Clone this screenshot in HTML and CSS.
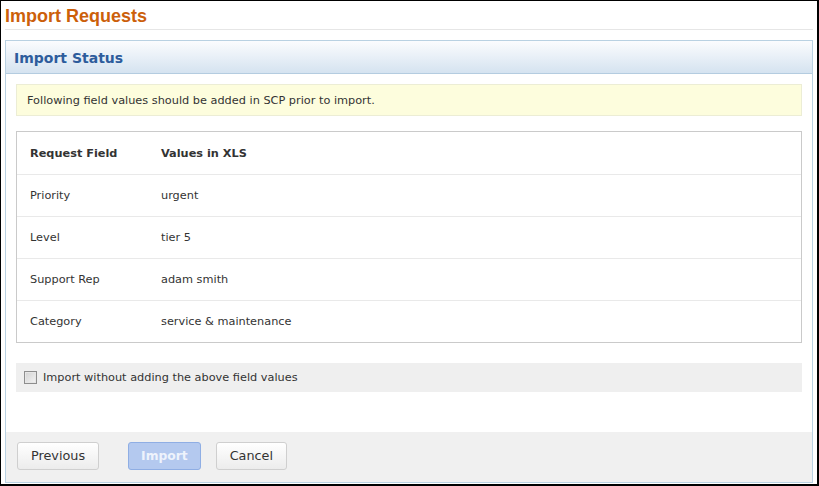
FILE: index.html
```html
<!DOCTYPE html>
<html lang="en">
<head>
  <meta charset="UTF-8">
  <title>Import Requests</title>
  <link rel="stylesheet" href="styles.css">
</head>
<body>
  <div class="frame">
    <h1 class="page-title">Import Requests</h1>

    <div class="panel">
      <div class="panel-head">Import Status</div>

      <div class="panel-body">
        <div class="note">Following field values should be added in SCP prior to import.</div>

        <!-- missing field values -->
        <div class="values">
          <div class="row head">
            <span class="col-field">Request Field</span>
            <span class="col-value">Values in XLS</span>
          </div>
          <div class="row">
            <span class="col-field">Priority</span>
            <span class="col-value">urgent</span>
          </div>
          <div class="row">
            <span class="col-field">Level</span>
            <span class="col-value">tier 5</span>
          </div>
          <div class="row">
            <span class="col-field">Support Rep</span>
            <span class="col-value">adam smith</span>
          </div>
          <div class="row">
            <span class="col-field">Category</span>
            <span class="col-value">service &amp; maintenance</span>
          </div>
        </div>

        <label class="skip">
          <input type="checkbox">
          <span>Import without adding the above field values</span>
        </label>
      </div>

      <div class="panel-foot">
        <button class="btn">Previous</button>
        <button class="btn primary" disabled>Import</button>
        <button class="btn">Cancel</button>
      </div>
    </div>
  </div>
</body>
</html>
```

FILE: styles.css
```css
/* ======= Global ======= */
html, body {
  margin: 0;
  padding: 0;
  background: #fff;
}

body {
  font-family: "DejaVu Sans", Verdana, sans-serif;
  font-size: 11.3px;
  color: #333;
}

.frame {
  box-sizing: border-box;
  width: 819px;
  height: 486px;
  border: 1px solid #000;
  border-right-width: 2px;
  border-bottom-width: 2px;
  padding: 0 4px 1px 4px;
  display: flex;
  flex-direction: column;
}

.page-title {
  margin: 0;
  height: 28px;
  line-height: 30px;
  font-family: "Liberation Sans", Arial, sans-serif;
  font-size: 18px;
  font-weight: bold;
  color: #cc5f0a;
  border-bottom: 1px solid #e6e6e6;
}

/* ======= Panel ======= */
.panel {
  flex: 1;
  margin-top: 10px;
  border: 1px solid #b9d1e2;
  display: flex;
  flex-direction: column;
}

.panel-head {
  height: 32px;
  line-height: 35px;
  padding-left: 8px;
  font-size: 14px;
  font-weight: bold;
  color: #2d5c9c;
  background: linear-gradient(#fbfcfe, #d5e3f0);
  border-bottom: 1px solid #b4cce0;
}

.panel-body {
  padding: 10px 10px 0 10px;
}

.note {
  height: 30px;
  line-height: 31px;
  padding-left: 10px;
  background: #fdfddd;
  border: 1px solid #ecedd5;
}

/* Tabela de valores */
.values {
  margin-top: 15px;
  border: 1px solid #cacaca;
}

.row {
  display: flex;
  align-items: center;
  height: 41px;
  padding-left: 13px;
  border-bottom: 1px solid #e9e9e9;
}

.row:last-child {
  border-bottom: none;
}

.row.head {
  height: 42px;
  font-weight: bold;
}

.col-field {
  width: 131px;
}

/* Checkbox */
.skip {
  display: flex;
  align-items: center;
  margin-top: 20px;
  height: 29px;
  padding-left: 8px;
  background: #efefef;
}

.skip input {
  -webkit-appearance: none;
  appearance: none;
  box-sizing: border-box;
  width: 13px;
  height: 13px;
  margin: 0 6px 0 0;
  border: 1px solid #8e8e8e;
  background: linear-gradient(135deg, #d2d2d2, #f4f4f4);
  box-shadow: inset 0 0 0 1px #e6e6e6;
}

/* ======= Footer ======= */
.panel-foot {
  margin-top: auto;
  height: 50px;
  background: #f0f0f0;
  display: flex;
  align-items: center;
  padding-left: 11px;
}

.btn {
  height: 28px;
  padding: 0 13px;
  font-family: "DejaVu Sans", Verdana, sans-serif;
  font-size: 12.8px;
  color: #333;
  background: linear-gradient(#ffffff, #ececec);
  border: 1px solid #cfcfcf;
  border-radius: 3px;
  margin-right: 15px;
  margin-top: -3px;
}

.btn:first-child {
  margin-right: 29px;
}

.btn.primary {
  font-weight: bold;
  font-size: 12.3px;
  color: #eef3fc;
  background: #b4c9ef;
  border-color: #8faee4;
  padding: 0 12px;
}
```
